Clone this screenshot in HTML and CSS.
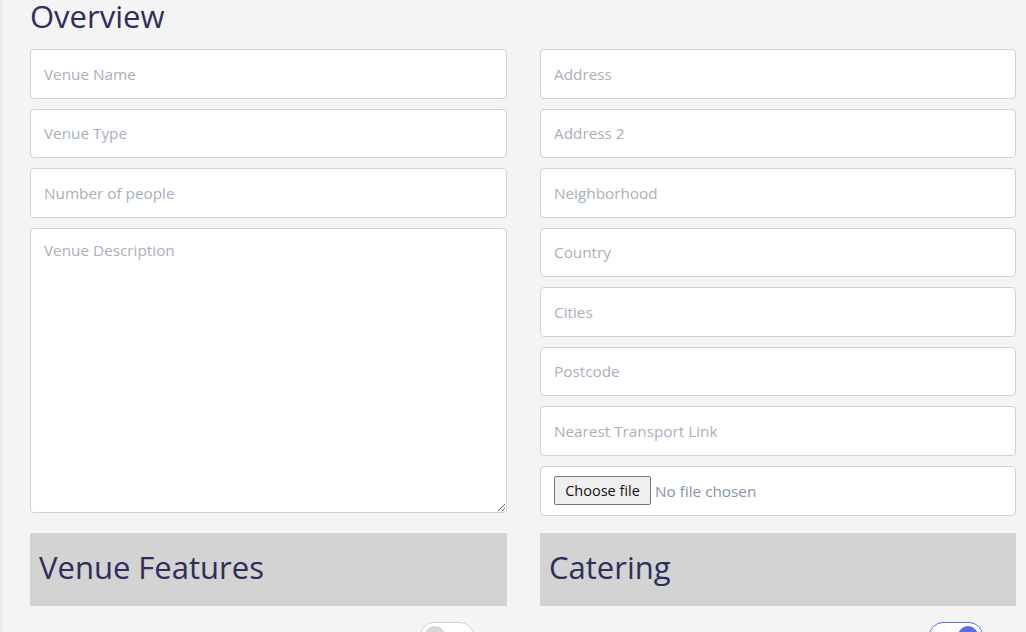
FILE: index.html
```html
<!DOCTYPE html>
<html>
<head>
<meta charset="utf-8">
<link rel="stylesheet" href="styles.css">
</head>
<body>
<div class="page">
  <h1 class="title">Overview</h1>
  <div class="grid">
    <div class="col">
      <input class="field" type="text" placeholder="Venue Name">
      <input class="field" type="text" placeholder="Venue Type">
      <input class="field" type="text" placeholder="Number of people">
      <textarea class="field area" placeholder="Venue Description"></textarea>
    </div>
    <div class="col">
      <input class="field" type="text" placeholder="Address">
      <input class="field" type="text" placeholder="Address 2">
      <input class="field" type="text" placeholder="Neighborhood">
      <input class="field" type="text" placeholder="Country">
      <input class="field" type="text" placeholder="Cities">
      <input class="field" type="text" placeholder="Postcode">
      <input class="field" type="text" placeholder="Nearest Transport Link">
      <label class="field filebox">
        <input class="file" type="file">
        <span class="file-btn">Choose file</span>
        <span class="file-name">No file chosen</span>
      </label>
    </div>
  </div>
  <div class="grid sections">
    <div class="col">
      <h2 class="band">Venue Features</h2>
      <div class="row"><span class="label">Wifi</span><span class="toggle"><span class="knob"></span></span></div>
    </div>
    <div class="col">
      <h2 class="band">Catering</h2>
      <div class="row"><span class="label">In-house catering</span><span class="toggle on"><span class="knob"></span></span></div>
    </div>
  </div>
</div>
</body>
</html>
```
FILE: styles.css
```css
html, body {
  margin: 0;
  padding: 0;
  background: #f4f4f4;
  font-family: "Open Sans", "Noto Sans", sans-serif;
  overflow: hidden;
}
body {
  border-left: 3px solid #ebebeb;
  height: 632px;
  box-sizing: border-box;
}
.page {
  padding: 0 10px 0 27px;
}
.title {
  margin: -4px 0 0 0;
  font-size: 31px;
  line-height: 40px;
  font-weight: 400;
  color: #2f2d5b;
  height: 53px;
  box-sizing: border-box;
}
.grid {
  display: grid;
  grid-template-columns: 477px 476px;
  column-gap: 33px;
}
.col {
  display: flex;
  flex-direction: column;
  gap: 10px;
}
.field {
  display: block;
  box-sizing: border-box;
  width: 100%;
  height: 49.5px;
  margin: 0;
  padding: 0 13px;
  background: #fff;
  border: 1px solid #ced3d9;
  border-radius: 4px;
  font-family: "Open Sans", "Noto Sans", sans-serif;
  font-size: 15.3px;
  color: #495057;
  outline: none;
}
.field::placeholder {
  color: #a8b0bb;
}
.area {
  height: 285px;
  padding-top: 11px;
  resize: vertical;
}
.filebox {
  display: flex;
  align-items: center;
  gap: 4px;
  height: 50px;
}
.file {
  display: none;
}
.file-btn {
  box-sizing: border-box;
  height: 29px;
  width: 97px;
  display: flex;
  align-items: center;
  justify-content: center;
  background: #efefef;
  border: 1px solid #767676;
  border-radius: 2px;
  color: #111;
  font-size: 14.5px;
}
.file-name {
  color: #8794a6;
  font-size: 15.3px;
}
.sections {
  margin-top: 17px;
}
.sections .col {
  gap: 16px;
}
.band {
  margin: 0;
  height: 73px;
  background: #d3d3d3;
  display: flex;
  align-items: center;
  padding: 0 9px 5px;
  box-sizing: border-box;
  font-size: 31px;
  font-weight: 400;
  color: #2f2d5b;
}
.row {
  display: flex;
  align-items: flex-start;
  justify-content: space-between;
  padding-left: 30px;
  padding-right: 33px;
}
.label {
  padding-top: 6px;
  font-size: 15px;
  font-weight: 600;
  color: #2f2d5b;
}
.toggle {
  position: relative;
  width: 54px;
  height: 28px;
  box-sizing: border-box;
  border: 1px solid #d0d3d9;
  border-radius: 14px;
  background: #fff;
}
.knob {
  position: absolute;
  top: 3px;
  left: 4px;
  width: 20px;
  height: 20px;
  border-radius: 50%;
  background: #d6d6d6;
}
.toggle.on {
  border-color: #5b6ee1;
}
.toggle.on .knob {
  left: auto;
  right: 4px;
  background: #5b6ee1;
}
```
